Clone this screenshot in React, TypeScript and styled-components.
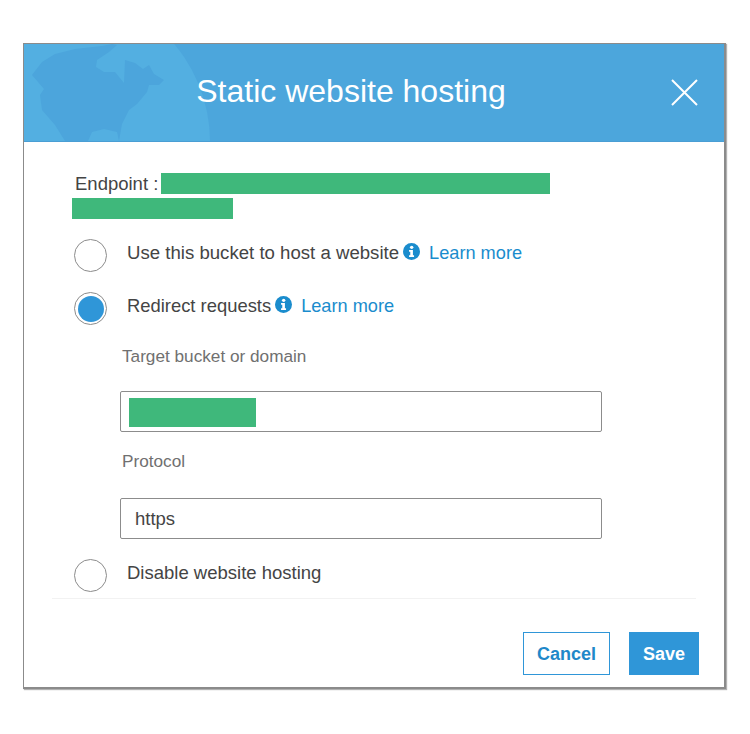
import styled, { createGlobalStyle } from "styled-components";

const GlobalStyle = createGlobalStyle`
	html, body {
		margin: 0;
		padding: 0;
		background: #ffffff;
		font-family: "Liberation Sans", Arial, sans-serif;
	}
`;

const Page = styled.div`
	width: 750px;
	height: 734px;
	padding: 43px 0 0 23px;
	box-sizing: border-box;
`;

const Dialog = styled.div`
	width: 703px;
	height: 646px;
	box-sizing: border-box;
	display: flex;
	flex-direction: column;
	background: #ffffff;
	border: 1px solid #8b8b8b;
	border-width: 1px 2px 2px 1px;
	box-shadow: 1px 1px 1px rgba(0, 0, 0, 0.3);
`;

const Header = styled.header`
	position: relative;
	height: 97px;
	flex: none;
	display: flex;
	align-items: center;
	justify-content: center;
	padding-right: 46px;
	background: #4ca6dc;
	border-bottom: 1px solid #4a9ed4;
	overflow: hidden;
`;

const Globe = styled.svg`
	position: absolute;
	left: 0;
	top: 0;
`;

const Title = styled.h1`
	position: relative;
	margin: 0 0 2px 0;
	color: #ffffff;
	font-size: 32px;
	font-weight: 400;
`;

const CloseButton = styled.button`
	position: absolute;
	right: 26px;
	top: 35px;
	width: 27px;
	height: 27px;
	padding: 0;
	border: none;
	background: none;
`;

const Body = styled.div`
	flex: 1;
	padding: 31px 29px 0 28px;
	color: #444444;
`;

const Endpoint = styled.div`
	display: flex;
	flex-direction: column;
	gap: 4px;
	margin-bottom: 20px;
	font-size: 18.5px;
`;

const EndpointLine = styled.div`
	display: flex;
	align-items: center;
	gap: 3px;
	padding-left: 23px;
	height: 21px;
`;

const Redacted = styled.div<{ $width: number; $height: number; $indent?: number; $drop?: number }>`
	flex: none;
	width: ${({ $width }) => $width}px;
	height: ${({ $height }) => $height}px;
	margin-left: ${({ $indent }) => $indent ?? 0}px;
	margin-top: ${({ $drop }) => $drop ?? 0}px;
	background: #3fb87b;
`;

const OptionRow = styled.div<{ $gap: number; $top?: number }>`
	display: flex;
	align-items: flex-start;
	height: 33px;
	margin-top: ${({ $top }) => $top ?? 0}px;
	margin-bottom: ${({ $gap }) => $gap}px;
	padding-left: 22px;
`;

const Radio = styled.span<{ $checked?: boolean }>`
	flex: none;
	width: 33px;
	height: 33px;
	box-sizing: border-box;
	border-radius: 50%;
	border: 1.5px solid #8c8c8c;
	background: #ffffff;
	display: flex;
	align-items: center;
	justify-content: center;
	&::after {
		content: "";
		width: 26px;
		height: 26px;
		border-radius: 50%;
		background: ${({ $checked }) => ($checked ? "#2f96d8" : "transparent")};
	}
`;

const OptionLabel = styled.div<{ $size: number }>`
	display: flex;
	align-items: center;
	height: 20px;
	margin: 4px 0 0 20px;
	font-size: ${({ $size }) => $size}px;
	white-space: nowrap;
`;

const InfoIcon = styled.svg`
	flex: none;
	margin: 0 0 3px 4px;
`;

const LearnMore = styled.a`
	margin-left: 9px;
	color: #1a8ccd;
	font-size: 18.2px;
`;

const Field = styled.div`
	padding-left: 68px;
`;

const FieldLabel = styled.div<{ $top: number }>`
	margin: ${({ $top }) => $top}px 0 0 2px;
	height: 21px;
	line-height: 21px;
	font-size: 17.2px;
	color: #707070;
`;

const InputBox = styled.div<{ $top: number }>`
	width: 482px;
	height: 41px;
	margin-top: ${({ $top }) => $top}px;
	box-sizing: border-box;
	display: flex;
	align-items: center;
	padding: 0 0 0 8px;
	border: 1.5px solid #8c8c8c;
	border-radius: 2px;
	font-size: 18.5px;
	color: #444444;
`;

const InputValue = styled.span`
	margin-left: 6px;
`;

const Footer = styled.footer`
	margin: 0 28px;
	padding: 33px 0 12px;
	border-top: 1px solid #f2f2f2;
	display: flex;
	justify-content: flex-end;
	gap: 19px;
`;

const ActionButton = styled.button<{ $primary?: boolean }>`
	height: 43px;
	width: ${({ $primary }) => ($primary ? "70px" : "87px")};
	margin-right: ${({ $primary }) => ($primary ? "-3px" : "0")};
	box-sizing: border-box;
	padding: 2px 0 0;
	border: 1px solid #2f96d8;
	border-radius: 0;
	background: ${({ $primary }) => ($primary ? "#2f96d8" : "#ffffff")};
	color: ${({ $primary }) => ($primary ? "#ffffff" : "#1f88c9")};
	font-family: inherit;
	font-size: 18px;
	font-weight: 700;
`;

const Info = () => (
	<InfoIcon width="17" height="17" viewBox="0 0 18 18">
		<circle cx="9" cy="9" r="9" fill="#1a8ccd" />
		<circle cx="9.2" cy="4.6" r="1.8" fill="#ffffff" />
		<path d="M6.4 7.4h4.1v5.6h1.2v1.8H6.4V13h1.3V9.2H6.4z" fill="#ffffff" />
	</InfoIcon>
);

const App = () => {
	return (
		<>
			<GlobalStyle />
			<Page>
				<Dialog>
					<Header>
						<Globe width="200" height="97" viewBox="0 0 200 97">
							<circle cx="34" cy="98" r="152" fill="#53afe1" />
							<path
								d="M8 31 L18 18 L31 10 L51 5 L78 2 L88 0 L93 1 L85 8 L73 16 L72 23 L80 28 L91 28 L100 39 L101 16 L111 19 L119 25 L125 21 L130 30 L140 36 L135 41 L125 41 L123 48 L113 60 L105 66 L98 80 L95 97 L41 97 L31 81 L18 66 L16 51 L20 45 Z"
								fill="#4ca5dc"
							/>
							<path d="M64 97 L68 88 L80 85 L93 88 L95 97 Z" fill="#53afe1" />
						</Globe>
						<Title>Static website hosting</Title>
						<CloseButton aria-label="Close">
							<svg width="27" height="27" viewBox="0 0 27 27">
								<path d="M1 1 L26 26 M26 1 L1 26" stroke="#ffffff" strokeWidth="2" fill="none" />
							</svg>
						</CloseButton>
					</Header>
					<Body>
						<Endpoint>
							<EndpointLine>
								Endpoint :<Redacted $width={389} $height={21} />
							</EndpointLine>
							<Redacted $width={161} $height={21} $indent={20} />
						</Endpoint>
						<OptionRow $gap={20}>
							<Radio />
							<OptionLabel $size={18.62}>
								Use this bucket to host a website
								<Info />
								<LearnMore>Learn more</LearnMore>
							</OptionLabel>
						</OptionRow>
						<OptionRow $gap={0}>
							<Radio $checked />
							<OptionLabel $size={18.4}>
								Redirect requests
								<Info />
								<LearnMore>Learn more</LearnMore>
							</OptionLabel>
						</OptionRow>
						<Field>
							<FieldLabel $top={21}>Target bucket or domain</FieldLabel>
							<InputBox $top={24}>
								<Redacted $width={127} $height={29} $drop={1} />
							</InputBox>
							<FieldLabel $top={19}>Protocol</FieldLabel>
							<InputBox $top={26}>
								<InputValue>https</InputValue>
							</InputBox>
						</Field>
						<OptionRow $gap={0} $top={20}>
							<Radio />
							<OptionLabel $size={18.5}>Disable website hosting</OptionLabel>
						</OptionRow>
					</Body>
					<Footer>
						<ActionButton>Cancel</ActionButton>
						<ActionButton $primary>Save</ActionButton>
					</Footer>
				</Dialog>
			</Page>
		</>
	);
};

export default App;
